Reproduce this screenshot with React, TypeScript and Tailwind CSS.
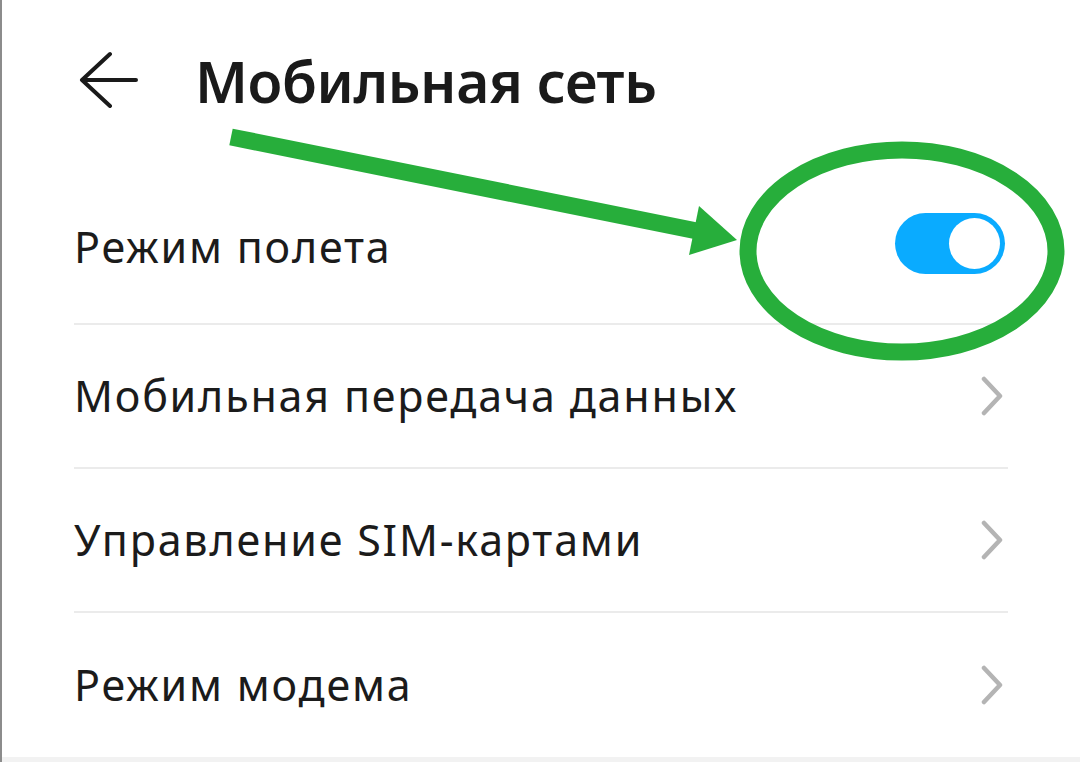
const rows = [
  'Мобильная передача данных',
  'Управление SIM-картами',
  'Режим модема',
]

const Chevron = () => (
  <svg width="24" height="40" viewBox="0 0 24 40" className="shrink-0">
    <path
      d="M4 3 L20 20 L4 37"
      fill="none"
      stroke="#b4b4b4"
      strokeWidth="4.5"
      strokeLinecap="round"
      strokeLinejoin="round"
    />
  </svg>
)

export default function App() {
  return (
    <div
      className="relative w-[1080px] h-[762px] overflow-hidden bg-white border-l-2 border-[#8c8c8c] flex flex-col"
      style={{ fontFamily: '"Noto Sans", Roboto, sans-serif' }}
    >
      {/* Header */}
      <div className="h-[172px] shrink-0 flex items-start pt-[43px] pl-[76px]">
        <svg width="62" height="62" viewBox="0 0 62 62" className="mt-[3px]">
          <path
            d="M4 34 L58 34 M32 8 L4 34 L32 60"
            fill="none"
            stroke="#1a1a1a"
            strokeWidth="4"
            strokeLinecap="round"
            strokeLinejoin="round"
          />
        </svg>
        <h1 className="ml-[55px] text-[57px] leading-[76px] font-semibold text-[#1a1a1a] tracking-[-0.4px]">
          Мобильная сеть
        </h1>
      </div>

      {/* List */}
      <div className="flex flex-col pl-[72px] pr-[72px]">
        <div className="h-[153px] flex items-center justify-between border-b-2 border-[#ebebeb] pr-[3px]">
          <span className="text-[43px] text-[#1b1b1b] tracking-[1.8px]">Режим полета</span>
          <div className="mb-2 w-[110px] h-[61px] rounded-full bg-[#0aabff] flex items-center justify-end pr-[5px]">
            <div className="w-[51px] h-[51px] rounded-full bg-white" />
          </div>
        </div>
        {rows.map((label, i) => (
          <div
            key={label}
            className={
              i < rows.length - 1
                ? 'h-[144px] flex items-center justify-between border-b-2 border-[#ebebeb] pr-[4px]'
                : 'h-[144px] flex items-center justify-between pr-[4px]'
            }
          >
            <span className="text-[43px] text-[#1b1b1b] tracking-[1.8px]">{label}</span>
            <Chevron />
          </div>
        ))}
      </div>
      <div className="flex-1 bg-[#f2f2f2]" />

      {/* Green annotation drawn over the screenshot */}
      <svg
        className="absolute inset-0 pointer-events-none"
        width="1080"
        height="762"
        viewBox="0 0 1080 762"
      >
        <line
          x1="229"
          y1="137"
          x2="695"
          y2="231"
          stroke="#27ae3b"
          strokeWidth="17"
        />
        <polygon points="735,240 697,206 687,255" fill="#27ae3b" />
        <ellipse
          cx="900"
          cy="251"
          rx="154"
          ry="101"
          fill="none"
          stroke="#27ae3b"
          strokeWidth="17"
        />
      </svg>
    </div>
  )
}
